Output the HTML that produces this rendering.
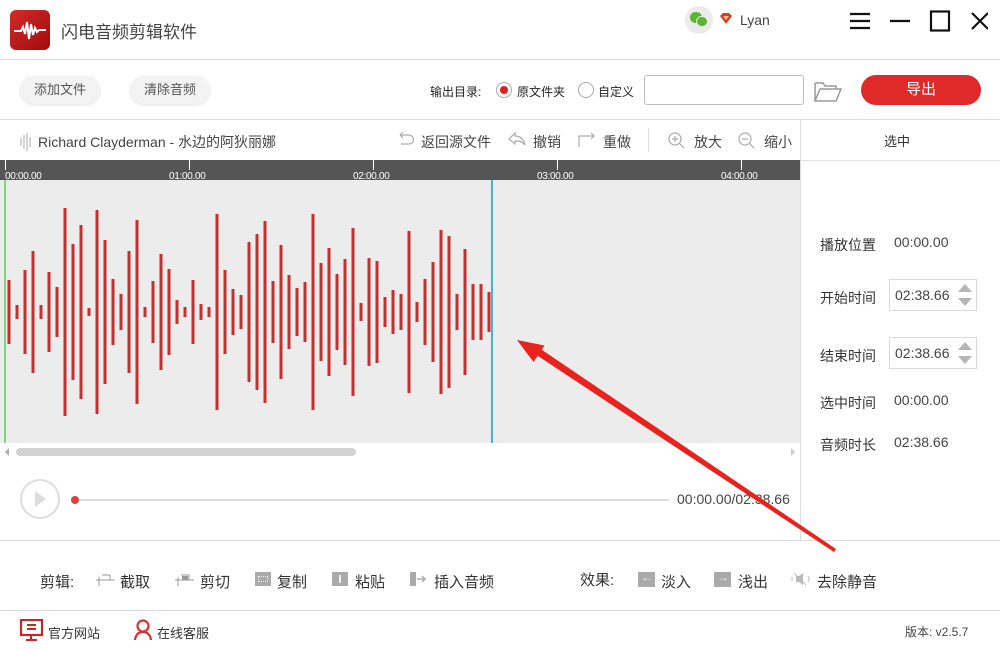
<!DOCTYPE html>
<html><head><meta charset="utf-8"><style>
*{margin:0;padding:0;box-sizing:border-box}
body{width:1000px;height:650px;overflow:hidden;background:#fff;font-family:"Liberation Sans","Noto Sans CJK SC",sans-serif;color:#333;position:relative}
.a{position:absolute;white-space:nowrap}
.hl{position:absolute;left:0;width:1000px;height:1px;background:#dcdcdc}
.btn{position:absolute;height:28px;border-radius:14px;background:#f3f3f3;box-shadow:0 1px 3px rgba(0,0,0,.12);font-size:13px;color:#555;text-align:center;line-height:28px}
.tb{font-size:14px;color:#444}
.lbl{font-size:14px;color:#333}
.val{font-size:14px;color:#444}
.spin{position:absolute;left:889px;width:88px;height:32px;border:1px solid #d8d8d8;background:#fff}
.spin span{position:absolute;left:5px;top:7px;font-size:14px;color:#444}
.up{position:absolute;right:4px;top:4px;width:0;height:0;border-left:7px solid transparent;border-right:7px solid transparent;border-bottom:8px solid #b5b5b5}
.dn{position:absolute;right:4px;top:18px;width:0;height:0;border-left:7px solid transparent;border-right:7px solid transparent;border-top:8px solid #b5b5b5}
.ed{font-size:15px;color:#333}
.ic{position:absolute;background:#aaa}
</style></head><body>

<!-- title bar -->
<div class="a" style="left:10px;top:10px;width:40px;height:40px;border-radius:6px;background:linear-gradient(135deg,#d42a2a,#a00c0c)">
<svg width="40" height="40" viewBox="0 0 40 40"><path d="M4 21 H11 L13 17 L15 24 L17 12 L19 29 L21 14 L23 25 L25 18 L27 22 L29 20 H36" stroke="#fff" stroke-width="2" fill="none"/></svg></div>
<div class="a" style="left:61px;top:18px;font-size:17px;color:#444">闪电音频剪辑软件</div>

<div class="a" style="left:685px;top:6px;width:28px;height:28px;border-radius:14px;background:#ebebeb"></div>
<div class="a" style="left:690px;top:12px;width:12px;height:11px;border-radius:6px;background:#5cb531"></div>
<div class="a" style="left:696px;top:16px;width:12px;height:11px;border-radius:6px;background:#5cb531;border:1px solid #ebebeb"></div>
<svg class="a" style="left:719px;top:13px" width="14" height="12" viewBox="0 0 14 12"><path d="M1 3 L4 0 H10 L13 3 L7 11 Z" fill="#d6401a"/><path d="M4 3 H10 L7 7Z" fill="#f6b98f"/></svg>
<div class="a" style="left:740px;top:12px;font-size:14px;color:#444">Lyan</div>
<svg class="a" style="left:848px;top:10px" width="140" height="22" viewBox="0 0 140 22">
<path d="M2 4H22M2 11H22M2 18H22" stroke="#111" stroke-width="2.2"/>
<path d="M42 11H62" stroke="#111" stroke-width="2.2"/>
<rect x="83" y="1.5" width="18" height="19" fill="none" stroke="#111" stroke-width="2.2"/>
<path d="M124 3L140 19M140 3L124 19" stroke="#111" stroke-width="2.2"/>
</svg>
<div class="hl" style="top:59px"></div>

<!-- toolbar -->
<div class="btn" style="left:20px;top:76px;width:80px">添加文件</div>
<div class="btn" style="left:130px;top:76px;width:80px">清除音频</div>
<div class="a" style="left:430px;top:83px;font-size:12px;color:#222">输出目录:</div>
<div class="a" style="left:496px;top:82px;width:16px;height:16px;border-radius:8px;border:1px solid #aaa"></div>
<div class="a" style="left:500px;top:86px;width:8px;height:8px;border-radius:4px;background:#e02020"></div>
<div class="a" style="left:517px;top:83px;font-size:12px;color:#222">原文件夹</div>
<div class="a" style="left:578px;top:82px;width:16px;height:16px;border-radius:8px;border:1px solid #aaa"></div>
<div class="a" style="left:598px;top:83px;font-size:12px;color:#222">自定义</div>
<div class="a" style="left:644px;top:75px;width:160px;height:30px;border:1px solid #bbb;border-radius:3px"></div>
<svg class="a" style="left:814px;top:80px" width="28" height="22" viewBox="0 0 28 22"><path d="M1 3H9L11 6H22V9M1 3V21H22L27 9H6L1 21" fill="none" stroke="#999" stroke-width="1.5"/></svg>
<div class="a" style="left:861px;top:75px;width:120px;height:30px;border-radius:15px;background:#e02a2a;color:#fff;font-size:15px;text-align:center;line-height:30px">导出</div>
<div class="hl" style="top:119px"></div>

<!-- track header -->
<svg class="a" style="left:20px;top:133px" width="12" height="18"><path d="M1 5V13M4 2V16M7 0V18M10 4V14" stroke="#aaa" stroke-width="1"/></svg>
<div class="a" style="left:38px;top:132px;font-size:14px;color:#444">Richard Clayderman - 水边的阿狄丽娜</div>
<svg class="a" style="left:396px;top:132px" width="18" height="16"><path d="M4 3H13A4 4 0 0 1 13 12H5M4 3L7 0M4 3L7 6" fill="none" stroke="#aaa" stroke-width="1.2"/></svg>
<div class="a tb" style="left:421px;top:132px">返回源文件</div>
<svg class="a" style="left:508px;top:132px" width="18" height="16"><path d="M1 7L7 1V4C13 4 16 8 17 13C14 9 11 9 7 9V12Z" fill="none" stroke="#aaa" stroke-width="1.2"/></svg>
<div class="a tb" style="left:533px;top:132px">撤销</div>
<svg class="a" style="left:578px;top:132px" width="20" height="16"><path d="M1 15V4H16M13 1L16 4L13 7" fill="none" stroke="#aaa" stroke-width="1.2"/></svg>
<div class="a tb" style="left:603px;top:132px">重做</div>
<div class="a" style="left:648px;top:128px;width:1px;height:24px;background:#ddd"></div>
<svg class="a" style="left:668px;top:132px" width="20" height="18"><circle cx="7" cy="7" r="6" fill="none" stroke="#aaa" stroke-width="1.2"/><path d="M4 7H10M7 4V10M11 11L16 16" stroke="#aaa" stroke-width="1.2"/></svg>
<div class="a tb" style="left:694px;top:132px">放大</div>
<svg class="a" style="left:738px;top:132px" width="20" height="18"><circle cx="7" cy="7" r="6" fill="none" stroke="#aaa" stroke-width="1.2"/><path d="M4 7H10M11 11L16 16" stroke="#aaa" stroke-width="1.2"/></svg>
<div class="a tb" style="left:764px;top:132px">缩小</div>

<!-- right panel -->
<div class="a" style="left:800px;top:120px;width:1px;height:420px;background:#dcdcdc"></div>
<div class="a" style="left:884px;top:131px;font-size:13px;color:#333">选中</div>
<div class="a" style="left:801px;top:160px;width:199px;height:1px;background:#e2e2e2"></div>
<div class="a lbl" style="left:820px;top:235px">播放位置</div><div class="a val" style="left:894px;top:234px">00:00.00</div>
<div class="a lbl" style="left:820px;top:288px">开始时间</div>
<div class="spin" style="top:279px"><span>02:38.66</span><i class="up"></i><i class="dn"></i></div>
<div class="a lbl" style="left:820px;top:346px">结束时间</div>
<div class="spin" style="top:337px"><span>02:38.66</span><i class="up"></i><i class="dn"></i></div>
<div class="a lbl" style="left:820px;top:393px">选中时间</div><div class="a val" style="left:894px;top:392px">00:00.00</div>
<div class="a lbl" style="left:820px;top:435px">音频时长</div><div class="a val" style="left:894px;top:434px">02:38.66</div>

<!-- timeline + waveform -->
<svg class="a" style="left:0;top:160px" width="800" height="300" viewBox="0 160 800 300">
<rect x="0" y="160" width="800" height="20" fill="#555"/>
<g stroke="#fff" stroke-width="1"><path d="M5.5 160V170M189.5 160V170M373.5 160V170M557.5 160V170M741.5 160V170"/></g>
<g fill="#fff" font-size="10" font-family="Liberation Sans,sans-serif" letter-spacing="-0.3">
<text x="5" y="179">00:00.00</text><text x="169" y="179">01:00.00</text><text x="353" y="179">02:00.00</text><text x="537" y="179">03:00.00</text><text x="721" y="179">04:00.00</text></g>
<rect x="0" y="180" width="800" height="263" fill="#ececec"/>
<g fill="#c62f2f" id="w"></g>
<rect x="4" y="180" width="2" height="263" fill="#7fd47f"/>
<rect x="491" y="180" width="2" height="263" fill="#4aaed6"/>
<rect x="0" y="443" width="800" height="17" fill="#fff"/>
<path d="M9 448V456L5 452Z" fill="#aaa"/><path d="M791 448V456L795 452Z" fill="#ccc"/>
<rect x="16" y="448" width="340" height="8" rx="4" fill="#d3d3d3"/>
<rect x="0" y="460" width="800" height="1" fill="#dcdcdc"/>
</svg>
<script>
(function(){var d=[[9,32],[17,7],[25,42],[33,61],[41,7],[49,40],[57,25],[65,104],[73,68],[81,87],[89,4],[97,102],[105,72],[113,33],[121,18],[129,61],[137,92],[145,5],[153,31],[161,58],[169,43],[177,12],[185,5],[193,32],[201,8],[209,5],[217,98],[225,42],[233,23],[241,17],[249,70],[257,78],[265,91],[273,31],[281,67],[289,37],[297,24],[305,30],[313,98],[321,49],[329,64],[337,38],[345,53],[353,84],[361,9],[369,54],[377,51],[385,15],[393,22],[401,18],[409,81],[417,10],[425,33],[433,50],[441,82],[449,76],[457,18],[465,63],[473,28],[481,28],[489,20]];
var g=document.getElementById('w'),s='';d.forEach(function(b){s+='<rect x="'+(b[0]-1.5)+'" y="'+(312-b[1])+'" width="3" height="'+(2*b[1])+'"/>';});g.innerHTML=s;})();
</script>

<!-- player -->
<div class="a" style="left:20px;top:479px;width:40px;height:40px;border-radius:20px;border:2px solid #ddd"></div>
<div class="a" style="left:35px;top:491px;width:0;height:0;border-top:8px solid transparent;border-bottom:8px solid transparent;border-left:11px solid #ddd"></div>
<div class="a" style="left:75px;top:499px;width:594px;height:2px;background:#ddd"></div>
<div class="a" style="left:71px;top:496px;width:8px;height:8px;border-radius:4px;background:#d94040"></div>
<div class="a" style="left:677px;top:491px;font-size:14px;color:#444">00:00.00/02:38.66</div>
<div class="hl" style="top:540px"></div>

<!-- edit row -->
<div class="a ed" style="left:40px;top:571px">剪辑:</div>
<svg class="a" style="left:96px;top:571px" width="20" height="16"><path d="M0 9H19M3 6V15M6 4H14V9" fill="none" stroke="#999" stroke-width="1"/></svg>
<div class="a ed" style="left:120px;top:571px">截取</div>
<svg class="a" style="left:175px;top:571px" width="20" height="16"><path d="M0 9H19M3 6V15M6 4H14V9" fill="none" stroke="#999" stroke-width="1"/><rect x="7" y="5" width="6" height="4" fill="#999"/></svg>
<div class="a ed" style="left:200px;top:571px">剪切</div>
<div class="ic" style="left:255px;top:572px;width:16px;height:14px"></div><div class="a" style="left:258px;top:576px;width:10px;height:6px;border:1px dotted #eee"></div>
<div class="a ed" style="left:277px;top:571px">复制</div>
<div class="ic" style="left:332px;top:572px;width:16px;height:14px"></div><div class="a" style="left:339px;top:575px;width:2px;height:8px;background:#eee"></div>
<div class="a ed" style="left:355px;top:571px">粘贴</div>
<div class="ic" style="left:410px;top:572px;width:6px;height:14px"></div><svg class="a" style="left:417px;top:574px" width="12" height="10"><path d="M0 5H8M5 2L8 5L5 8" fill="none" stroke="#aaa" stroke-width="1.5"/></svg>
<div class="a ed" style="left:434px;top:571px">插入音频</div>

<div class="a ed" style="left:580px;top:569px">效果:</div>
<div class="ic" style="left:638px;top:572px;width:17px;height:15px"></div><div class="a" style="left:641px;top:570px;font-size:12px;color:#eee">←</div>
<div class="a ed" style="left:661px;top:571px">淡入</div>
<div class="ic" style="left:714px;top:572px;width:17px;height:15px"></div><div class="a" style="left:717px;top:570px;font-size:12px;color:#eee">→</div>
<div class="a ed" style="left:738px;top:571px">浅出</div>
<svg class="a" style="left:791px;top:571px" width="20" height="16"><path d="M5 5H8L12 2V14L8 11H5Z" fill="#bbb"/><path d="M3 2L15 14M1 6V10M17 5Q19 8 17 11" stroke="#bbb" fill="none" stroke-width="1"/></svg>
<div class="a ed" style="left:817px;top:571px">去除静音</div>
<div class="hl" style="top:610px"></div>

<!-- footer -->
<svg class="a" style="left:19px;top:619px" width="26" height="22"><rect x="2" y="1" width="21" height="15" fill="none" stroke="#c62828" stroke-width="2.2"/><path d="M8 6H17M8 10H17M12 16V20M7 21H18" stroke="#c62828" stroke-width="2"/></svg>
<div class="a" style="left:48px;top:623px;font-size:13px;color:#333">官方网站</div>
<svg class="a" style="left:133px;top:619px" width="20" height="22"><circle cx="10" cy="7" r="5.5" fill="none" stroke="#d63030" stroke-width="2.2"/><path d="M2 21Q3 13 10 13Q17 13 18 21" fill="none" stroke="#d63030" stroke-width="2.2"/></svg>
<div class="a" style="left:157px;top:623px;font-size:13px;color:#333">在线客服</div>
<div class="a" style="left:905px;top:623px;font-size:12px;color:#444">版本: v2.5.7</div>

<!-- red arrow -->
<svg class="a" style="left:0;top:0" width="1000" height="650"><path d="M537.4 355.6L541.4 349.5L836 549L834 552Z" fill="#e8231d"/><path d="M517 340L544.5 345.5L533.5 362Z" fill="#e8231d"/></svg>
</body></html>
